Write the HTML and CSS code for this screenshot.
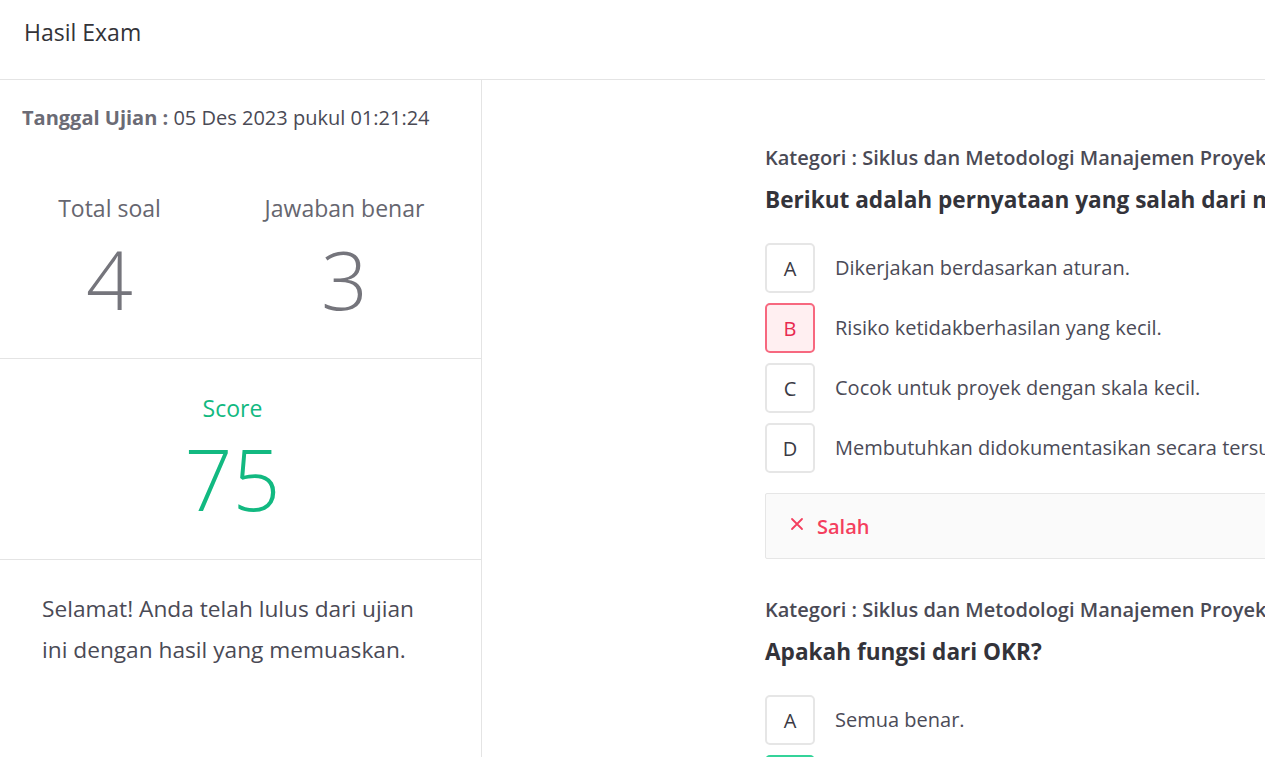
FILE: index.html
```html
<!DOCTYPE html>
<html lang="id">
<head>
<meta charset="utf-8">
<title>Hasil Exam</title>
<link rel="stylesheet" href="styles.css">
</head>
<body>
<header class="topbar">Hasil Exam</header>
<div class="main">
  <aside class="summary">
    <div class="date"><span class="date-label">Tanggal Ujian :</span> 05 Des 2023 pukul 01:21:24</div>
    <div class="stats">
      <div class="stat">
        <div class="stat-label">Total soal</div>
        <div class="stat-value">4</div>
      </div>
      <div class="stat">
        <div class="stat-label">Jawaban benar</div>
        <div class="stat-value">3</div>
      </div>
    </div>
    <div class="score">
      <div class="score-label">Score</div>
      <div class="score-value">75</div>
    </div>
    <p class="message">Selamat! Anda telah lulus dari ujian ini dengan hasil yang memuaskan.</p>
  </aside>
  <section class="review">
    <div class="review-inner">
      <div class="question">
        <div class="category">Kategori : Siklus dan Metodologi Manajemen Proyek</div>
        <h2 class="q-text">Berikut adalah pernyataan yang salah dari metodologi waterfall adalah...</h2>
        <div class="options">
          <div class="option"><span class="letter">A</span><span class="opt-text">Dikerjakan berdasarkan aturan.</span></div>
          <div class="option"><span class="letter letter-wrong">B</span><span class="opt-text">Risiko ketidakberhasilan yang kecil.</span></div>
          <div class="option"><span class="letter">C</span><span class="opt-text">Cocok untuk proyek dengan skala kecil.</span></div>
          <div class="option"><span class="letter">D</span><span class="opt-text">Membutuhkan didokumentasikan secara tersusun.</span></div>
        </div>
        <div class="result result-wrong">
          <svg class="x-icon" width="14" height="14" viewBox="0 0 14 14"><path d="M2 2 L12 12 M12 2 L2 12" stroke="currentColor" stroke-width="1.8" stroke-linecap="round"/></svg>
          <span>Salah</span>
        </div>
      </div>
      <div class="question">
        <div class="category">Kategori : Siklus dan Metodologi Manajemen Proyek</div>
        <h2 class="q-text">Apakah fungsi dari OKR?</h2>
        <div class="options">
          <div class="option"><span class="letter">A</span><span class="opt-text">Semua benar.</span></div>
          <div class="option"><span class="letter letter-right">B</span><span class="opt-text">Menetapkan tujuan.</span></div>
          <div class="option"><span class="letter">C</span><span class="opt-text">Mengukur hasil.</span></div>
        </div>
      </div>
    </div>
  </section>
</div>
</body>
</html>
```

FILE: styles.css
```css
* { box-sizing: border-box; }

html, body {
  margin: 0;
  padding: 0;
  height: 100%;
  overflow: hidden;
}

body {
  font-family: "Open Sans", "Noto Sans", sans-serif;
  color: #333333;
  background: #ffffff;
}

.topbar {
  height: 80px;
  padding: 18px 24px;
  font-size: 23px;
  line-height: 28px;
  color: #333338;
  border-bottom: 1px solid #e4e4e4;
}

.main {
  display: flex;
  height: calc(100vh - 80px);
}

.summary {
  flex: 0 0 482px;
  border-right: 1px solid #e4e4e4;
}

.date {
  padding: 26px 22px 0;
  font-size: 20px;
  line-height: 24px;
  color: #4a4a55;
  white-space: nowrap;
}

.date-label {
  font-weight: 700;
  color: #6b6b75;
}

.stats {
  display: grid;
  grid-template-columns: 219px 219px;
  column-gap: 16px;
  padding: 63px 0 36px;
  border-bottom: 1px solid #e4e4e4;
}

.stat {
  text-align: center;
}

.stat-label {
  font-size: 23px;
  line-height: 30px;
  color: #66666f;
}

.stat-value {
  margin-top: 11px;
  font-size: 82px;
  line-height: 88px;
  font-weight: 300;
  color: #75757c;
}

.score {
  padding: 34px 16px 35px 0;
  text-align: center;
  border-bottom: 1px solid #e4e4e4;
  color: #12b981;
}

.score-label {
  font-size: 23px;
  line-height: 30px;
}

.score-value {
  margin-top: 11px;
  font-size: 84px;
  line-height: 90px;
  font-weight: 300;
}

.message {
  margin: 0;
  padding: 28px 42px 0;
  font-size: 22.7px;
  line-height: 41px;
  color: #4a4a55;
}

.review {
  flex: 1 1 auto;
  min-width: 0;
  padding: 66px 0 0 283px;
}

.review-inner {
  width: 900px;
}

.question + .question {
  margin-top: 39px;
}

.category {
  font-size: 20px;
  line-height: 24px;
  font-weight: 600;
  color: #4a4a55;
  white-space: nowrap;
}

.q-text {
  margin: 15px 0 0;
  font-size: 22.6px;
  line-height: 30px;
  font-weight: 700;
  color: #33333a;
  white-space: nowrap;
}

.options {
  display: flex;
  flex-direction: column;
  gap: 10px;
  margin-top: 28px;
}

.option {
  display: flex;
  align-items: center;
  gap: 20px;
}

.letter {
  flex: 0 0 50px;
  height: 50px;
  display: flex;
  align-items: center;
  justify-content: center;
  border: 2px solid #e6e6e6;
  border-radius: 5px;
  font-size: 20px;
  color: #3a3a44;
  background: #ffffff;
}

.letter-wrong {
  border-color: #f7687f;
  background: #ffeff1;
  color: #e8294f;
}

.letter-right {
  border-color: #34d399;
  background: #ecfdf5;
  color: #10b981;
}

.opt-text {
  font-size: 20px;
  line-height: 24px;
  color: #4b4b57;
  white-space: nowrap;
}

.result {
  display: flex;
  align-items: center;
  gap: 13px;
  margin-top: 20px;
  height: 66px;
  padding: 0 24px;
  background: #fafafa;
  border: 1px solid #e6e6e6;
  border-radius: 2px;
  font-size: 20px;
  font-weight: 600;
}

.result-wrong {
  color: #f43f5e;
}

.x-icon {
  margin-top: -4px;
}
```
